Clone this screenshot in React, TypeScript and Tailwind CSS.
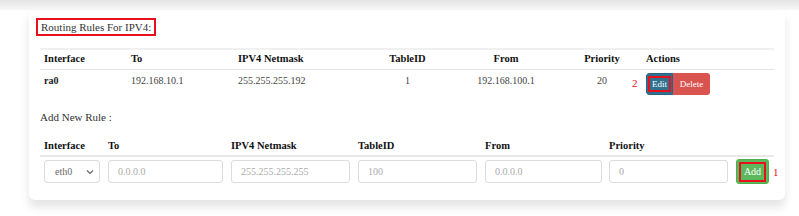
import React from "react";

export default function App() {
  return (
    <div className="w-[799px] h-[216px] bg-white overflow-hidden relative font-serif">
      <div className="h-[10px] bg-gradient-to-b from-[#e3e3e3] to-[#f7f7f7]" />
      <div className="ml-[29px] w-[756px] h-[190px] bg-white rounded-[6px] shadow-[0_7px_10px_rgba(0,0,0,0.11)] pt-[8px] pl-[7px] pr-[11px] relative font-[family-name:Liberation_Serif]">
        {/* title */}
        <div className="flex w-fit items-center h-[18px] border-2 border-[#e8101b] px-[3px] text-[11px] leading-none text-[#333]">
          Routing Rules For IPV4:
        </div>

        {/* table 1 */}
        <div className="ml-[4px] mt-[12px] w-[734px] border-t-2 border-[#f0f0f0]">
          <div className="grid grid-cols-[87px_107px_131px_85px_112px_80px_132px] h-[20px] items-center border-b border-[#e3e3e3] text-[10.5px] leading-none font-bold text-[#111]">
            <div className="pl-[4px]">Interface</div>
            <div className="pl-[4px]">To</div>
            <div className="pl-[4px]">IPV4 Netmask</div>
            <div className="text-center">TableID</div>
            <div className="text-center">From</div>
            <div className="text-center">Priority</div>
            <div className="pl-[4px]">Actions</div>
          </div>
          <div className="grid grid-cols-[87px_107px_131px_85px_112px_80px_132px] h-[30px] text-[10px] leading-none text-[#444]">
            <div className="pl-[4px] pt-[6px] font-bold text-[#222]">ra0</div>
            <div className="pl-[4px] pt-[6px]">192.168.10.1</div>
            <div className="pl-[4px] pt-[6px]">255.255.255.192</div>
            <div className="text-center pt-[6px]">1</div>
            <div className="text-center pt-[6px]">192.168.100.1</div>
            <div className="text-center pt-[6px]">20</div>
            <div className="pl-[4px] pt-[3px] relative">
              <span className="absolute left-[-10px] top-[8px] text-[11px] leading-none text-[#e8101b]">2</span>
              <div className="flex h-[22px] w-[64px] rounded-[3px] overflow-hidden">
                <div className="w-[27px] h-full bg-[#31708f] border border-[#2a6580] rounded-l-[3px] flex items-center justify-center">
                  <div className="w-[23px] h-[16px] border-2 border-[#e8101b] flex items-center justify-center text-[9px] text-white">
                    Edit
                  </div>
                </div>
                <div className="flex-1 h-full bg-[#d9534f] flex items-center justify-center text-[9px] text-white">
                  Delete
                </div>
              </div>
            </div>
          </div>
        </div>

        {/* Add New Rule */}
        <div className="ml-[4px] mt-[9px] h-[16px] flex items-center text-[11px] leading-none text-[#333]">Add New Rule :</div>

        {/* table 2 */}
        <div className="ml-[4px] mt-[12px] w-[734px]">
          <div className="grid grid-cols-[64px_123px_127px_127px_124px_127px_42px] h-[20px] items-center border-b-2 border-[#e8e8e8] text-[10.5px] leading-none font-bold text-[#111]">
            <div className="pl-[4px]">Interface</div>
            <div className="pl-[4px]">To</div>
            <div className="pl-[4px]">IPV4 Netmask</div>
            <div className="pl-[4px]">TableID</div>
            <div className="pl-[4px]">From</div>
            <div className="pl-[4px]">Priority</div>
            <div />
          </div>
          <div className="grid grid-cols-[64px_123px_127px_127px_124px_127px_42px] pt-[3px] text-[10px] leading-none">
            <div className="pl-[4px]">
              <div className="w-[56px] h-[23px] border border-[#dcdcdc] rounded-[3px] flex items-center justify-between pl-[10px] pr-[5px] text-[#666]">
                <span>eth0</span>
                <svg width="8" height="6" viewBox="0 0 8 6" fill="none" stroke="#666" strokeWidth="1.2">
                  <path d="M1 1.5 L4 4.5 L7 1.5" />
                </svg>
              </div>
            </div>
            {[
              ["0.0.0.0", "w-[115px]"],
              ["255.255.255.255", "w-[119px]"],
              ["100", "w-[119px]"],
              ["0.0.0.0", "w-[117px]"],
              ["0", "w-[119px]"],
            ].map(([p, w], i) => (
              <div key={i} className="pl-[4px]">
                <div className={`${w} h-[23px] border border-[#dcdcdc] rounded-[3px] flex items-center pl-[9px] text-[#aaa]`}>
                  {p}
                </div>
              </div>
            ))}
            <div className="pl-[4px] relative">
              <div className="w-[33px] h-[25px] -mt-[1px] bg-[#5cb85c] border border-[#4cae4c] rounded-[3px] flex items-center justify-center">
                <div className="w-[27px] h-[20px] border-2 border-[#e8101b] flex items-center justify-center text-[10px] text-white">
                  Add
                </div>
              </div>
              <span className="absolute left-[41px] top-[7px] text-[11px] leading-none text-[#e8101b]">1</span>
            </div>
          </div>
        </div>
      </div>
    </div>
  );
}
